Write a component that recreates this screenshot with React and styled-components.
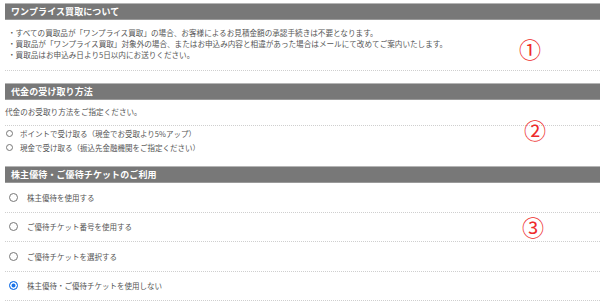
import React from 'react'
import styled, { createGlobalStyle } from 'styled-components'

const GlobalStyle = createGlobalStyle`
  body {
    margin: 0;
    background: #fff;
    font-family: "Noto Sans CJK JP", "Noto Sans", sans-serif;
    color: #555;
  }
`

const Page = styled.div`
  width: 600px;
  height: 302px;
  overflow: hidden;
  padding: 3px 0 0 5px;
  box-sizing: border-box;
`

const Section = styled.section`
  position: relative;
  margin-bottom: ${(p) => p.$gap || 0}px;
`

const Header = styled.h2`
  margin: 0;
  height: 15px;
  line-height: 15px;
  border-top: 1px solid #b5b5b5;
  border-bottom: 1px solid #9a9a9a;
  background: #787878;
  color: #fff;
  font-size: 9px;
  font-weight: bold;
  padding-left: 6px;
  letter-spacing: 0.1px;
`

const Body = styled.div`
  padding: ${(p) => p.$pad || '0'};
  border-bottom: 1px dotted #cfcfcf;
`

const Line = styled.p`
  margin: 0;
  font-size: 7.6px;
  line-height: 11px;
`

const Option = styled.label`
  display: flex;
  align-items: center;
  gap: ${(p) => (p.$wide ? 9 : 7)}px;
  height: ${(p) => p.$h}px;
  padding-left: ${(p) => (p.$wide ? 4 : 1)}px;
  font-size: 7.5px;
  border-bottom: ${(p) => (p.$line ? '1px dotted #cfcfcf' : 'none')};
`

const Radio = styled.span`
  flex: none;
  width: ${(p) => p.$size}px;
  height: ${(p) => p.$size}px;
  box-sizing: border-box;
  border-radius: 50%;
  border: 1px solid ${(p) => (p.$on ? '#1a73e8' : '#777')};
  background: ${(p) => (p.$on ? '#1a73e8' : '#fff')};
  box-shadow: ${(p) => (p.$on ? 'inset 0 0 0 1.5px #fff' : 'none')};
`

const Mark = styled.span`
  position: absolute;
  left: ${(p) => p.$x}px;
  top: ${(p) => p.$y}px;
  color: #ee2b2b;
  font-size: 22px;
  line-height: 22px;
  font-family: "Noto Sans CJK JP", sans-serif;
`

const tickets = [
  '株主優待を使用する',
  'ご優待チケット番号を使用する',
  'ご優待チケットを選択する',
  '株主優待・ご優待チケットを使用しない',
]

export default function App() {
  return (
    <Page>
      <GlobalStyle />
      <Section $gap={12}>
        <Header>ワンプライス買取について</Header>
        <Body $pad="7px 0 10px 3px">
          <Line>・すべての買取品が「ワンプライス買取」の場合、お客様によるお見積金額の承認手続きは不要となります。</Line>
          <Line>・買取品が「ワンプライス買取」対象外の場合、またはお申込み内容と相違があった場合はメールにて改めてご案内いたします。</Line>
          <Line>・買取品はお申込み日より5日以内にお送りください。</Line>
        </Body>
        <Mark $x={514} $y={34}>①</Mark>
      </Section>

      <Section $gap={12}>
        <Header>代金の受け取り方法</Header>
        <Body $pad="6px 0 8px 0">
          <Line>代金のお受取り方法をご指定ください。</Line>
        </Body>
        <Option $h={14}><Radio $size={7} />ポイントで受け取る（現金でお受取より5%アップ）</Option>
        <Option $h={14}><Radio $size={7} />現金で受け取る（振込先金融機関をご指定ください）</Option>
        <Mark $x={519} $y={35}>②</Mark>
      </Section>

      <Section>
        <Header>株主優待・ご優待チケットのご利用</Header>
        {tickets.map((t, i) => (
          <Option key={t} $wide $h={28.5} $line>
            <Radio $size={9} $on={i === 3} />
            {t}
          </Option>
        ))}
        <Mark $x={517} $y={49}>③</Mark>
      </Section>
    </Page>
  )
}
